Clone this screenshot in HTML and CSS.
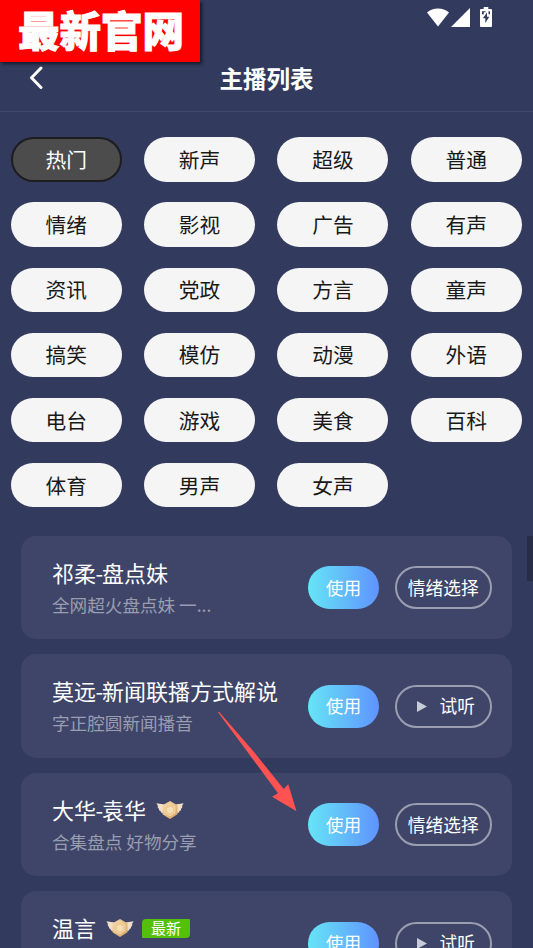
FILE: index.html
```
<!DOCTYPE html>
<html lang="zh-CN">
<head>
<meta charset="utf-8">
<title>主播列表</title>
<link rel="stylesheet" href="styles.css">
</head>
<body>
<svg class="defs" width="0" height="0" aria-hidden="true">
  <defs>
    <linearGradient id="gold" x1="0" y1="0" x2="1" y2="1"><stop offset="0" stop-color="#f6dcae"/><stop offset="1" stop-color="#d7a362"/></linearGradient>
    <symbol id="medal" viewBox="0 0 28 20">
      <path d="M.3 3.200 8.500 4.600v9L5 12.600 4.500 11 3 10.300V9L1.800 7.500v-2zM27.700 3.200 19.500 4.600v9l3.500-1 .5-1.600 1.500-.7V9l1.200-1.500v-2z" fill="#f3dfc8"/>
      <path d="M14 1 21.500 5.200V14.300L14 19 6.500 14.300V5.200z" fill="url(#gold)"/>
      <path d="M14 3.700 19 6.600v6.200L14 15.900 9 12.800V6.600z" fill="#edca91" stroke="#f4d7a6" stroke-width=".8"/>
      <path d="M14 6.500 17 8.200v3.500L14 13.500 11 11.700V8.200z" fill="#f7dfb5"/>
    </symbol>
  </defs>
</svg>
<main class="screen">
  <header class="header">
    <div class="status">
      <svg class="wifi" viewBox="0 0 22 19"><path d="M0 4.500C6-1 16-1 22 4.500L11 18.500z"/></svg>
      <svg class="signal" viewBox="0 0 19 19"><path d="M19 0v19H0z"/></svg>
      <svg class="battery" viewBox="0 0 12 20"><path fill-rule="evenodd" d="M3.700 0h4.600v2H11q1 0 1 1v16q0 1-1 1H1q-1 0-1-1V3q0-1 1-1h2.700zM7 5.500 2.800 11.300h2.500V16l4-6.300H7zM2 4.300v3h1.800v-2h1.700v-1zM8.500 4.300v3H10v-3z"/></svg>
    </div>
    <div class="nav">
      <svg class="back" viewBox="0 0 14 24"><path d="M12 2 2.500 11.800 12 21.500"/></svg>
      <h1>主播列表</h1>
    </div>
    <div class="ribbon">最新官网</div>
  </header>
  <nav class="tags">
    <span class="tag active">热门</span><span class="tag">新声</span><span class="tag">超级</span><span class="tag">普通</span>
    <span class="tag">情绪</span><span class="tag">影视</span><span class="tag">广告</span><span class="tag">有声</span>
    <span class="tag">资讯</span><span class="tag">党政</span><span class="tag">方言</span><span class="tag">童声</span>
    <span class="tag">搞笑</span><span class="tag">模仿</span><span class="tag">动漫</span><span class="tag">外语</span>
    <span class="tag">电台</span><span class="tag">游戏</span><span class="tag">美食</span><span class="tag">百科</span>
    <span class="tag">体育</span><span class="tag">男声</span><span class="tag">女声</span>
  </nav>
  <section class="list">
    <article class="card">
      <div class="info"><h2>祁柔<span class="dash">-</span>盘点妹</h2><p>全网超火盘点妹 一...</p></div>
      <span class="use">使用</span><span class="option">情绪选择</span>
    </article>
    <article class="card">
      <div class="info"><h2>莫远<span class="dash">-</span>新闻联播方式解说</h2><p>字正腔圆新闻播音</p></div>
      <span class="use">使用</span><span class="option listen"><svg class="play" viewBox="0 0 10 11"><path d="M0 0 10 5.500 0 11z"/></svg>试听</span>
    </article>
    <article class="card">
      <div class="info"><h2>大华<span class="dash">-</span>袁华<svg class="medal"><use href="#medal"/></svg></h2><p>合集盘点 好物分享</p></div>
      <span class="use">使用</span><span class="option">情绪选择</span>
    </article>
    <article class="card">
      <div class="info"><h2>温言<svg class="medal"><use href="#medal"/></svg><span class="new">最新</span></h2><p>&nbsp;</p></div>
      <span class="use">使用</span><span class="option listen"><svg class="play" viewBox="0 0 10 11"><path d="M0 0 10 5.500 0 11z"/></svg>试听</span>
    </article>
  </section>
  <i class="scrollbar"></i>
  <svg class="arrow" viewBox="0 0 80 102"><path d="M0 1.200 1 .8 36 41 65.700 78 70.300 73.300 78.500 100.300 54 85.700 60 82.300 31 43z"/></svg>
</main>
</body>
</html>
```
FILE: styles.css
```
* { box-sizing: border-box; }
body { margin: 0; background: #323a5d; color: #fff; font-family: "Noto Sans CJK SC", sans-serif; }
h1, h2, p { margin: 0; font-weight: 400; }
.defs { position: absolute; }
.screen { position: relative; width: 533px; height: 948px; overflow: hidden; }
.header { height: 112px; border-bottom: 1px solid #434a6b; }
.status { height: 45px; padding: 8px 41px 0 0; display: flex; justify-content: flex-end; fill: #fff; }
.wifi { width: 22px; height: 19px; }
.signal { width: 19px; height: 19px; margin: 0 10px 0 2px; }
.battery { width: 12px; height: 20px; margin-top: -1px; }
.nav { height: 66px; display: grid; grid-template-columns: 60px 1fr 60px; align-items: center; }
.back { width: 14px; height: 24px; margin-left: 29px; fill: none; stroke: #fff; stroke-width: 3; stroke-linecap: round; stroke-linejoin: round; }
.nav h1 { font-size: 23.5px; font-weight: 700; text-align: center; line-height: 36px; padding-bottom: 1px; }
.ribbon { position: absolute; left: 0; top: 0; width: 200px; height: 62px; padding-left: 18px; background: #f00; box-shadow: 2px 2px 3px rgba(0, 0, 0, .55); font-size: 41.5px; font-weight: 900; line-height: 58px; white-space: nowrap; -webkit-text-stroke: 1px #fff; }
.tags { display: grid; grid-template-columns: repeat(4, 111px); grid-auto-rows: 44.600px; justify-content: space-between; row-gap: 20.500px; padding: 25.400px 11.200px 0 10.700px; }
.tag { display: flex; align-items: center; justify-content: center; padding-bottom: 1px; border-radius: 23px; background: #f5f5f5; color: #191919; font-size: 20.700px; line-height: 30px; }
.tag.active { background: #4c4c4c; color: #fff; border: 2px solid #1d1d1f; }
.list { display: flex; flex-direction: column; gap: 15px; padding: 28.300px 21px 0; }
.card { height: 103.500px; flex: none; display: flex; align-items: center; padding: 0 20.500px 0 31px; background: #3e4568; border-radius: 15px; }
.info { width: 256px; flex: none; }
.info h2 { display: flex; align-items: center; height: 32px; font-size: 22px; line-height: 32px; white-space: nowrap; }
.dash { width: 6.500px; margin-left: -.5px; }
.info p { height: 32px; color: #9a9db0; font-size: 17.600px; line-height: 33px; white-space: nowrap; }
.use, .option { display: flex; align-items: center; justify-content: center; height: 43px; padding-bottom: 2px; border-radius: 22px; font-size: 17.700px; line-height: 26px; white-space: nowrap; }
.use { width: 71px; margin-right: 16px; background: linear-gradient(90deg, #66e5f6, #5f93fe); }
.option { width: 96.500px; flex: none; border: 2px solid #9b9eb1; }
.listen { padding-left: 5px; }
.play { width: 10px; height: 11px; margin: 2px 13px 0 0; fill: #c9cbd6; }
.medal { width: 28px; height: 20px; margin: 2px 0 0 10px; }
.new { width: 48px; height: 19px; margin: 2px 0 0 8px; border-radius: 4px 1px 4px 1px; background: #54c00c; font-size: 15px; line-height: 18px; text-align: center; }
.scrollbar { position: absolute; right: 0; top: 536px; width: 6px; height: 45px; background: #272d47; }
.arrow { position: absolute; left: 218px; top: 711px; width: 80px; height: 102px; fill: #ff5252; }
```
